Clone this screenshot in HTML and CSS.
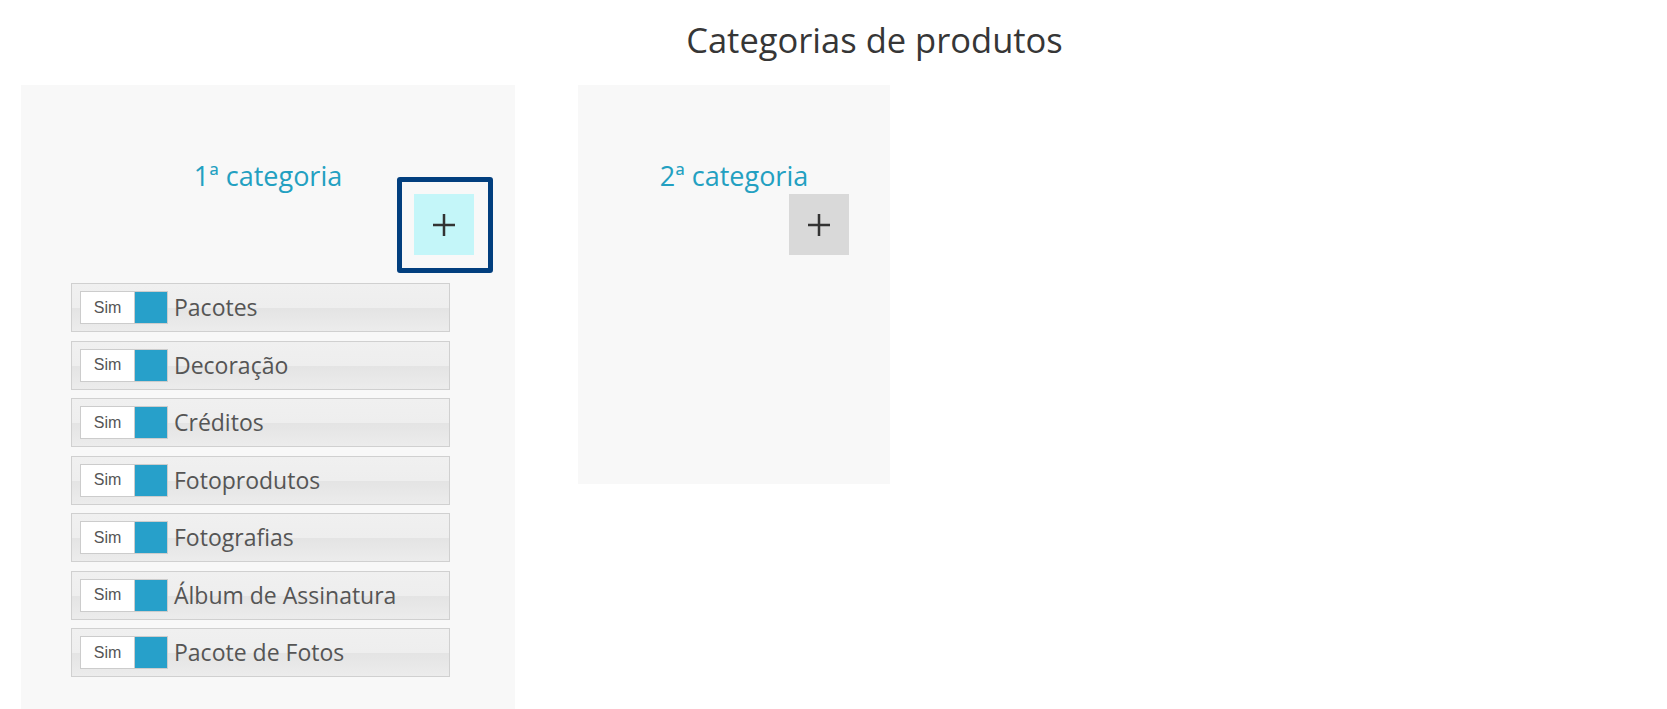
FILE: index.html
```html
<!DOCTYPE html>
<html lang="pt-BR">
<head>
<meta charset="utf-8">
<title>Categorias de produtos</title>
<link rel="stylesheet" href="styles.css">
</head>
<body>
<h1 class="page-title">Categorias de produtos</h1>
<div class="panels">
  <section class="panel panel-first">
    <h2 class="panel-title">1ª categoria</h2>
    <div class="btn-row">
      <button class="add-btn add-btn-active" type="button" aria-label="Adicionar">
        <svg class="plus" viewBox="0 0 22 22" width="22" height="22"><path d="M11 0V22M0 11H22" stroke="#333" stroke-width="2.5"/></svg>
      </button>
    </div>
    <ul class="cat-list">
      <li class="cat-row"><span class="toggle"><span class="toggle-on">Sim</span><span class="toggle-knob"></span></span><span class="cat-name">Pacotes</span></li>
      <li class="cat-row"><span class="toggle"><span class="toggle-on">Sim</span><span class="toggle-knob"></span></span><span class="cat-name">Decoração</span></li>
      <li class="cat-row"><span class="toggle"><span class="toggle-on">Sim</span><span class="toggle-knob"></span></span><span class="cat-name">Créditos</span></li>
      <li class="cat-row"><span class="toggle"><span class="toggle-on">Sim</span><span class="toggle-knob"></span></span><span class="cat-name">Fotoprodutos</span></li>
      <li class="cat-row"><span class="toggle"><span class="toggle-on">Sim</span><span class="toggle-knob"></span></span><span class="cat-name">Fotografias</span></li>
      <li class="cat-row"><span class="toggle"><span class="toggle-on">Sim</span><span class="toggle-knob"></span></span><span class="cat-name">Álbum de Assinatura</span></li>
      <li class="cat-row"><span class="toggle"><span class="toggle-on">Sim</span><span class="toggle-knob"></span></span><span class="cat-name">Pacote de Fotos</span></li>
    </ul>
  </section>
  <section class="panel panel-second">
    <h2 class="panel-title">2ª categoria</h2>
    <div class="btn-row">
      <button class="add-btn" type="button" aria-label="Adicionar">
        <svg class="plus" viewBox="0 0 22 22" width="22" height="22"><path d="M11 0V22M0 11H22" stroke="#333" stroke-width="2.5"/></svg>
      </button>
    </div>
  </section>
</div>
</body>
</html>
```

FILE: styles.css
```css
html, body {
  margin: 0;
  padding: 0;
  background: #ffffff;
  font-family: "Open Sans", "Noto Sans", sans-serif;
  overflow: hidden;
}

.page-title {
  margin: 17px 0 0 0;
  padding-left: 82px;
  text-align: center;
  font-size: 34.5px;
  font-weight: 400;
  line-height: 46px;
  color: #363636;
}

.panels {
  display: flex;
  align-items: flex-start;
  gap: 63px;
  padding-left: 21px;
  margin-top: 22px;
}

.panel {
  background: #f8f8f8;
  padding-top: 72px;
  box-sizing: border-box;
}

.panel-first {
  width: 494px;
  padding-bottom: 60px;
}

.panel-second {
  width: 312px;
  height: 399px;
}

.panel-title {
  margin: 0;
  text-align: center;
  font-size: 27px;
  font-weight: 400;
  line-height: 37px;
  color: #23a0c1;
}

.btn-row {
  display: flex;
  justify-content: flex-end;
  padding-right: 41px;
}

.add-btn {
  position: relative;
  width: 60px;
  height: 61px;
  border: 0;
  padding: 0;
  margin: 0;
  background: #d9d9d9;
  display: flex;
  align-items: center;
  justify-content: center;
}

.add-btn-active {
  background: #c4f6f9;
}

.add-btn-active::after {
  content: "";
  position: absolute;
  left: -17px;
  top: -17px;
  right: -19px;
  bottom: -18px;
  border: 5px solid #023f7e;
  border-radius: 3px;
}

.plus {
  display: block;
}

.cat-list {
  list-style: none;
  margin: 28px 0 0 50px;
  padding: 0;
  width: 379px;
  display: flex;
  flex-direction: column;
  gap: 8.5px;
}

.cat-row {
  height: 49px;
  box-sizing: border-box;
  border: 1px solid #d0d0d0;
  background: linear-gradient(to bottom, #f0f0f0 0%, #eeeeee 50%, #e4e4e4 52%, #ececec 100%);
  display: flex;
  align-items: center;
  padding-left: 8px;
}

.toggle {
  display: flex;
  height: 33px;
  box-sizing: border-box;
  border: 1px solid #cccccc;
}

.toggle-on {
  width: 53px;
  background: #ffffff;
  border-right: 1px solid #cccccc;
  font-family: "Liberation Sans", Arial, sans-serif;
  font-size: 16px;
  color: #555555;
  display: flex;
  align-items: center;
  justify-content: center;
}

.toggle-knob {
  width: 32px;
  background: #27a0ca;
}

.cat-name {
  margin-left: 6px;
  font-size: 23px;
  color: #555555;
  line-height: 1;
}
```
